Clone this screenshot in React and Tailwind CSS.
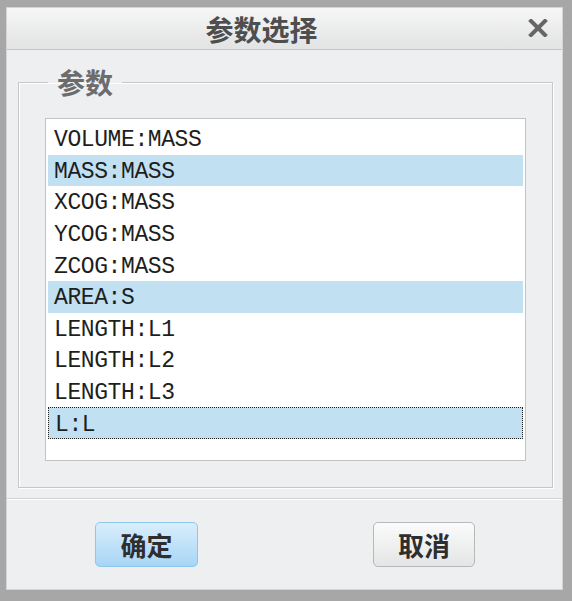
import React from 'react';

const items = [
  { label: 'VOLUME:MASS' },
  { label: 'MASS:MASS', selected: true },
  { label: 'XCOG:MASS' },
  { label: 'YCOG:MASS' },
  { label: 'ZCOG:MASS' },
  { label: 'AREA:S', selected: true },
  { label: 'LENGTH:L1' },
  { label: 'LENGTH:L2' },
  { label: 'LENGTH:L3' },
  { label: 'L:L', selected: true, focused: true },
];

const cjk = "font-['Noto_Sans_CJK_SC','Noto_Sans',sans-serif]";

export default function App() {
  return (
    <div className="w-[572px] h-[601px] bg-[#a7a7a7] pl-[6px] pt-[7px] pr-[9px] pb-[11px]">
      <div className="h-full flex flex-col border border-[#d4d4d4] bg-[#eeeff1]">
        {/* Title bar */}
        <div className="h-[42px] flex items-center relative bg-gradient-to-b from-[#f6f6f6] to-[#e2e3e4] border-b border-[#c4c5c6]">
          <div className={`flex-1 pr-[46px] text-center text-[28px] leading-none font-bold text-[#4e4e4e] ${cjk}`}>
            参数选择
          </div>
          <button className="absolute right-[14px] top-[11px] w-[20px] h-[18px] flex items-center justify-center">
            <svg width="20" height="18" viewBox="0 0 20 18">
              <path d="M3 2 L17 16 M17 2 L3 16" stroke="#666" strokeWidth="4" strokeLinecap="square" />
            </svg>
          </button>
        </div>

        {/* Body */}
        <div className="pt-[17px] pl-[11px] pr-[9px] pb-[10px] border-b border-[#d2d3d5]">
          <fieldset className="border border-[#c6c7c9] shadow-[inset_1px_1px_0_#fff,1px_1px_0_#fff] px-[26px] pb-[26px]">
            <legend className={`ml-[3px] px-[9px] text-[28px] leading-[30px] font-bold text-[#6c6c6c] ${cjk}`}>
              参数
            </legend>
            <div className="mt-[21px] h-[343px] bg-white border border-[#c2c3c5] pt-[4px] px-[2px]">
              {items.map((it) => (
                <div
                  key={it.label}
                  className={`h-[31.6px] flex items-center pl-[6px] pt-[4px] text-[23px] tracking-[-0.4px] leading-none text-[#1e1e1e] font-['Liberation_Mono',monospace] ${
                    it.selected ? 'bg-[#c1e1f2]' : ''
                  } ${it.focused ? 'border border-dotted border-[#222]' : ''}`}
                >
                  {it.label}
                </div>
              ))}
            </div>
          </fieldset>
        </div>

        {/* Buttons */}
        <div className="flex-1 border-t border-white flex items-start pt-[22px] pl-[88px]">
          <button
            className={`w-[103px] h-[45px] rounded-[5px] border border-[#8fc6ec] bg-gradient-to-b from-[#d9eefc] to-[#a8d5f5] text-[26px] leading-none font-bold text-[#2e2e2e] ${cjk}`}
          >
            确定
          </button>
          <button
            className={`ml-[175px] w-[102px] h-[45px] rounded-[5px] border border-[#b7b8ba] bg-gradient-to-b from-[#fbfbfb] to-[#e4e5e6] text-[26px] leading-none font-bold text-[#2e2e2e] ${cjk}`}
          >
            取消
          </button>
        </div>
      </div>
    </div>
  );
}
